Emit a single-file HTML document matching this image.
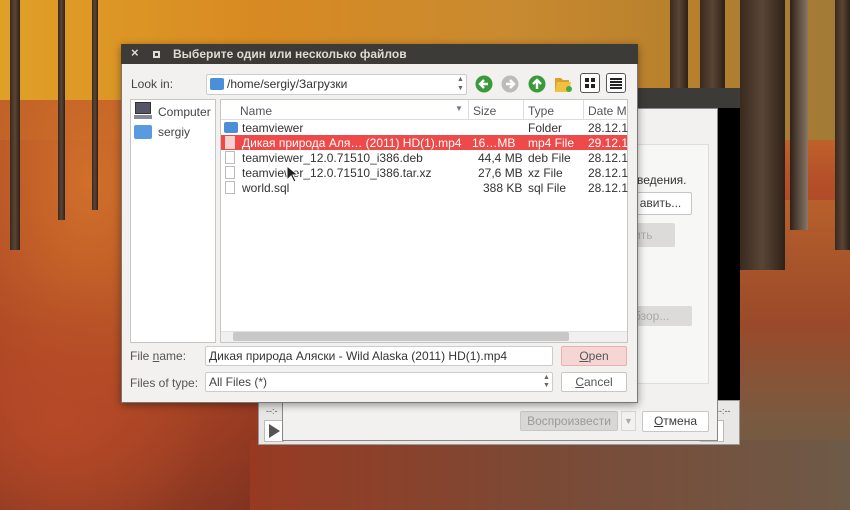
<!DOCTYPE html>
<html><head><meta charset="utf-8"><style>
*{box-sizing:border-box;margin:0;padding:0}
body{width:850px;height:510px;overflow:hidden;position:relative;font-family:"Liberation Sans","DejaVu Sans",sans-serif;font-size:12px;color:#3c3c3c;
background:linear-gradient(180deg,#d89a2a 0%,#c9782a 18%,#b5502a 35%,#a03a22 55%,#8f3220 75%,#7a3020 100%)}
.a{position:absolute}
.tree{position:absolute;background:linear-gradient(90deg,#3a2a1e,#5a4535,#2e2118)}
.btn{position:absolute;border:1px solid #c8c6c2;background:#fff;border-radius:2px;text-align:center;line-height:18px}
</style></head><body>
<div class="a" style="left:0;top:0;width:850px;height:140px;background:linear-gradient(90deg,#e0a028,#d88a22 30%,#c98a30 60%,#b8802c 80%,#a07a38)"></div>
<div class="a" style="left:0;top:100px;width:300px;height:410px;background:radial-gradient(ellipse at 30% 20%,#d0702a,rgba(176,74,38,.8) 50%,rgba(142,52,32,0) 95%)"></div>
<div class="a" style="left:0;top:280px;width:200px;height:230px;background:radial-gradient(ellipse at 30% 60%,rgba(184,74,40,.9),rgba(138,46,28,0) 75%)"></div>
<div class="a" style="left:740px;top:200px;width:110px;height:310px;background:linear-gradient(180deg,#b8602c,#9a4a2a 40%,#7a5a40 70%,#6a5a48)"></div>
<div class="a" style="left:250px;top:440px;width:600px;height:70px;background:linear-gradient(90deg,#983a22,#7a4a36 50%,#6e5a48)"></div>
<div class="tree" style="left:10px;top:0;width:10px;height:250px"></div>
<div class="tree" style="left:58px;top:0;width:7px;height:220px"></div>
<div class="tree" style="left:92px;top:0;width:6px;height:210px"></div>
<div class="tree" style="left:740px;top:0;width:45px;height:270px"></div>
<div class="tree" style="left:790px;top:0;width:18px;height:230px;background:linear-gradient(90deg,#2e2118,#8a7868)"></div>
<div class="tree" style="left:835px;top:0;width:15px;height:250px"></div>
<div class="tree" style="left:670px;top:0;width:18px;height:90px"></div>
<div class="tree" style="left:700px;top:0;width:25px;height:90px"></div>

<div class="a" style="left:625px;top:88px;width:115px;height:20px;background:#3c3b37"></div>
<div class="a" style="left:630px;top:108px;width:110px;height:295px;background:#000"></div>
<div class="a" style="left:258px;top:400px;width:482px;height:45px;background:#e8e7e5;border:1px solid #999"></div>
<div class="a" style="left:266px;top:406px;font-size:9px;color:#555">--:-</div>
<div class="a" style="left:716px;top:406px;font-size:9px;color:#555">--:--</div>
<div class="a" style="left:264px;top:420px;width:20px;height:22px;background:#fff;border:1px solid #bbb"></div>
<div class="a" style="left:269px;top:424px;width:0;height:0;border-left:11px solid #555;border-top:7px solid transparent;border-bottom:7px solid transparent"></div>
<div class="a" style="left:700px;top:420px;width:24px;height:22px;background:#fff;border:1px solid #bbb"></div>

<div class="a" style="left:282px;top:108px;width:436px;height:333px;background:#f2f1f0;border:1px solid #888"></div>
<div class="a" style="left:630px;top:144px;width:79px;height:240px;background:#f7f7f6;border:1px solid #ddd;border-left:none"></div>
<div class="a" style="left:637px;top:173px;font-size:12px;color:#333">ведения.</div>
<div class="btn" style="left:630px;top:192px;width:62px;height:23px;line-height:21px;border-left:none">авить...</div>
<div class="a" style="left:630px;top:223px;width:45px;height:24px;background:#dcdbd9;border-radius:2px;color:#aaa;line-height:24px;padding-left:4px">ить</div>
<div class="a" style="left:630px;top:306px;width:62px;height:20px;background:#dcdbd9;border-radius:2px;color:#aaa;line-height:20px;padding-left:4px">бзор...</div>
<div class="a" style="left:520px;top:411px;width:98px;height:20px;background:#d8d7d5;border:1px solid #c8c7c5;border-radius:2px;color:#999;text-align:center;line-height:18px">Воспроизвести</div>
<div class="a" style="left:621px;top:411px;width:15px;height:20px;border:1px solid #d8d7d5;color:#aaa;font-size:9px;text-align:center;line-height:18px">▼</div>
<div class="btn" style="left:642px;top:411px;width:67px;height:21px"><u>О</u>тмена</div>

<div class="a" style="left:121px;top:44px;width:517px;height:359px;background:#f2f1f0;border:1px solid #777;box-shadow:0 2px 8px rgba(0,0,0,.4)"></div>
<div class="a" style="left:121px;top:44px;width:517px;height:20px;background:#3c3b37;color:#dfdbd2;font-weight:bold;font-size:12px;line-height:20px;padding-left:52px">Выберите один или несколько файлов</div>
<div class="a" style="left:131px;top:45px;color:#dfdbd2;font-size:13px;font-weight:bold">×</div>
<div class="a" style="left:153px;top:51px;width:7px;height:7px;border:2px solid #dfdbd2"></div>

<div class="a" style="left:131px;top:77px;color:#444">Look in:</div>
<div class="a" style="left:206px;top:74px;width:261px;height:21px;background:#fff;border:1px solid #ccc;border-radius:2px"></div>
<div class="a" style="left:210px;top:78px;width:14px;height:12px;background:#4a8fd8;border-radius:2px"></div>
<div class="a" style="left:227px;top:77px;color:#333">/home/sergiy/Загрузки</div>
<div class="a" style="left:457px;top:75px;font-size:7px;color:#666;line-height:9px">▲<br>▼</div>
<svg class="a" style="left:474px;top:74px" width="20" height="20"><circle cx="10" cy="10" r="8.5" fill="#3a9a3a"/><path d="M14 10H7M10 6l-4 4 4 4" stroke="#fff" stroke-width="2.4" fill="none"/></svg>
<svg class="a" style="left:500px;top:74px" width="20" height="20"><circle cx="10" cy="10" r="8.5" fill="#bbb"/><path d="M6 10h7M10 6l4 4-4 4" stroke="#fff" stroke-width="2.4" fill="none"/></svg>
<svg class="a" style="left:527px;top:74px" width="20" height="20"><circle cx="10" cy="10" r="8.5" fill="#3a9a3a"/><path d="M10 15V7M6 10l4-4 4 4" stroke="#fff" stroke-width="2.4" fill="none"/></svg>
<svg class="a" style="left:553px;top:73px" width="20" height="22"><path d="M2 5h6l2 2h6v12H2z" fill="#d9a030"/><path d="M4 9h14l-2 10H2z" fill="#f0c040"/><circle cx="16" cy="16" r="3" fill="#4a4"/></svg>
<div class="a" style="left:580px;top:73px;width:20px;height:20px;border:1px solid #555;border-radius:3px;background:#fff"></div>
<div class="a" style="left:585px;top:78px;width:4px;height:4px;background:#222;box-shadow:6px 0 #222,0 6px #222,6px 6px #222"></div>
<div class="a" style="left:606px;top:73px;width:20px;height:20px;border:1px solid #555;border-radius:3px;background:#fff"></div>
<div class="a" style="left:610px;top:78px;width:12px;height:1.5px;background:#222;box-shadow:0 3px #222,0 6px #222,0 9px #222"></div>

<div class="a" style="left:130px;top:99px;width:86px;height:244px;background:#fff;border:1px solid #c8c6c2"></div>
<div class="a" style="left:135px;top:102px;width:16px;height:12px;background:#556;border:1px solid #333"></div>
<div class="a" style="left:134px;top:115px;width:18px;height:4px;background:#889"></div>
<div class="a" style="left:158px;top:105px;color:#444">Computer</div>
<div class="a" style="left:134px;top:125px;width:18px;height:14px;background:#5a9ae0;border-radius:2px"></div>
<div class="a" style="left:158px;top:125px;color:#444">sergiy</div>

<div class="a" style="left:220px;top:99px;width:408px;height:244px;background:#fff;border:1px solid #c8c6c2"></div>
<div class="a" style="left:221px;top:100px;width:406px;height:20px;border-bottom:1px solid #ddd;color:#555"></div>
<div class="a" style="left:240px;top:104px;color:#555">Name</div>
<div class="a" style="left:455px;top:104px;color:#777;font-size:8px">▼</div>
<div class="a" style="left:468px;top:100px;width:1px;height:20px;background:#ddd"></div>
<div class="a" style="left:473px;top:104px;color:#555">Size</div>
<div class="a" style="left:523px;top:100px;width:1px;height:20px;background:#ddd"></div>
<div class="a" style="left:528px;top:104px;color:#555">Type</div>
<div class="a" style="left:583px;top:100px;width:1px;height:20px;background:#ddd"></div>
<div class="a" style="left:588px;top:104px;color:#555">Date M</div>

<div class="a" style="left:224px;top:122px;width:14px;height:11px;background:#4a8fd8;border-radius:2px"></div>
<div class="a" style="left:242px;top:121px;color:#333">teamviewer</div>
<div class="a" style="left:528px;top:121px;color:#333">Folder</div>
<div class="a" style="left:588px;top:121px;color:#333">28.12.1</div>

<div class="a" style="left:221px;top:135px;width:406px;height:15px;background:#ef4a4a"></div>
<div class="a" style="left:225px;top:136px;width:10px;height:13px;background:#f9d0d0"></div>
<div class="a" style="left:242px;top:136px;color:#fff">Дикая природа Аля… (2011) HD(1).mp4</div>
<div class="a" style="left:472px;top:136px;color:#fff">16…MB</div>
<div class="a" style="left:528px;top:136px;color:#fff">mp4 File</div>
<div class="a" style="left:588px;top:136px;color:#fff">29.12.1</div>

<div class="a" style="left:225px;top:151px;width:10px;height:13px;border:1px solid #bbb;background:#fff"></div>
<div class="a" style="left:242px;top:151px;color:#333">teamviewer_12.0.71510_i386.deb</div>
<div class="a" style="left:478px;top:151px;color:#333">44,4 MB</div>
<div class="a" style="left:528px;top:151px;color:#333">deb File</div>
<div class="a" style="left:588px;top:151px;color:#333">28.12.1</div>

<div class="a" style="left:225px;top:166px;width:10px;height:13px;border:1px solid #bbb;background:#fff"></div>
<div class="a" style="left:242px;top:166px;color:#333">teamviewer_12.0.71510_i386.tar.xz</div>
<div class="a" style="left:478px;top:166px;color:#333">27,6 MB</div>
<div class="a" style="left:528px;top:166px;color:#333">xz File</div>
<div class="a" style="left:588px;top:166px;color:#333">28.12.1</div>

<div class="a" style="left:225px;top:181px;width:10px;height:13px;border:1px solid #bbb;background:#fff"></div>
<div class="a" style="left:242px;top:181px;color:#333">world.sql</div>
<div class="a" style="left:483px;top:181px;color:#333">388 KB</div>
<div class="a" style="left:528px;top:181px;color:#333">sql File</div>
<div class="a" style="left:588px;top:181px;color:#333">28.12.1</div>

<svg class="a" style="left:286px;top:165px" width="12" height="18"><path d="M1 1v14l4-4 3 6 2-1-3-6h5z" fill="#222" stroke="#fff" stroke-width="1"/></svg>

<div class="a" style="left:221px;top:331px;width:406px;height:11px;background:#f0f0f0;border-top:1px solid #e0e0e0"></div>
<div class="a" style="left:233px;top:332px;width:336px;height:9px;background:#c8c8c8;border-radius:2px"></div>

<div class="a" style="left:130px;top:349px;color:#555">File <u>n</u>ame:</div>
<div class="a" style="left:205px;top:346px;width:348px;height:20px;background:#fff;border:1px solid #ccc;border-radius:2px;padding-left:3px;line-height:18px;color:#333">Дикая природа Аляски - Wild Alaska (2011) HD(1).mp4</div>
<div class="a" style="left:561px;top:346px;width:66px;height:20px;background:#f6d6d4;border:1px solid #e8b0ae;border-radius:2px;text-align:center;line-height:18px;color:#555"><u>O</u>pen</div>
<div class="a" style="left:130px;top:376px;color:#555">Files of type:</div>
<div class="a" style="left:205px;top:372px;width:348px;height:20px;background:#fff;border:1px solid #ccc;border-radius:2px;padding-left:3px;line-height:18px;color:#444">All Files (*)</div>
<div class="a" style="left:543px;top:374px;font-size:7px;color:#666;line-height:8px">▲<br>▼</div>
<div class="btn" style="left:561px;top:372px;width:66px;height:20px;color:#555"><u>C</u>ancel</div>
</body></html>
